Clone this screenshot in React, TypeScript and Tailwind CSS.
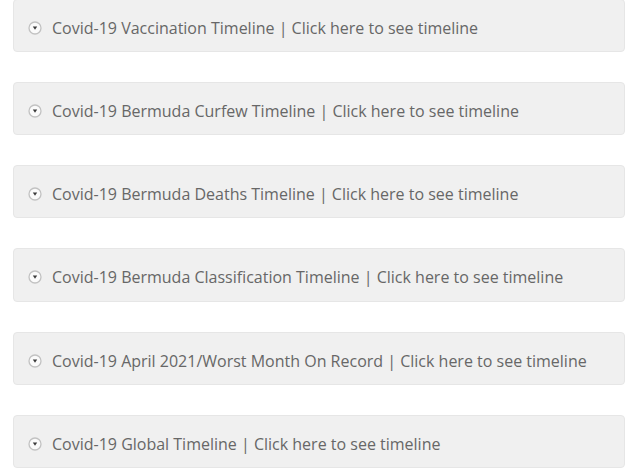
import React from "react";

const items = [
  "Covid-19 Vaccination Timeline | Click here to see timeline",
  "Covid-19 Bermuda Curfew Timeline | Click here to see timeline",
  "Covid-19 Bermuda Deaths Timeline | Click here to see timeline",
  "Covid-19 Bermuda Classification Timeline | Click here to see timeline",
  "Covid-19 April 2021/Worst Month On Record | Click here to see timeline",
  "Covid-19 Global Timeline | Click here to see timeline",
];

function Icon() {
  return (
    <svg width="14" height="14" viewBox="0 0 14 14" className="shrink-0">
      <circle cx="7" cy="7" r="6" fill="#fbfbfb" stroke="#c2c2c2" strokeWidth="1.3" />
      <path d="M4.8 5.6 L9.2 5.6 L7 8.8 Z" fill="#3a3a3a" />
    </svg>
  );
}

export default function App() {
  return (
    <div className="w-[640px] h-[469px] overflow-hidden bg-white font-['Open_Sans',sans-serif]">
      <div className="flex flex-col gap-[30px] pl-[13px] pr-[15px] mt-[-1.2px]">
        {items.map((t) => (
          <div
            key={t}
            className="h-[53.2px] flex items-center gap-[10px] pl-[14px] pt-[5px] rounded-[4px] bg-[#f0f0f0] border border-[#e6e6e6] text-[16px] leading-none text-[#676767]"
          >
            <Icon />
            <span>{t}</span>
          </div>
        ))}
      </div>
    </div>
  );
}
